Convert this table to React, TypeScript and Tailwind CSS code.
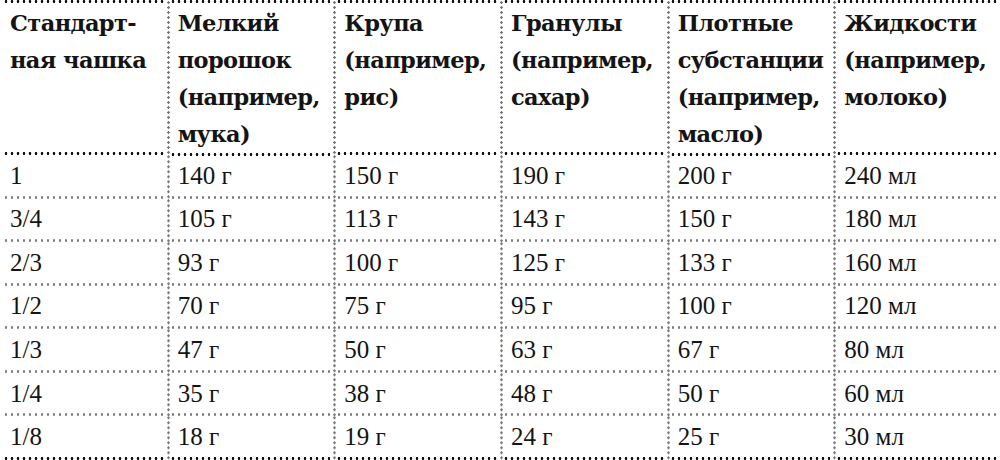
import React from 'react';

const HEADERS: string[][] = [
  ['Стандарт-', 'ная чашка'],
  ['Мелкий', 'порошок', '(например,', 'мука)'],
  ['Крупа', '(например,', 'рис)'],
  ['Гранулы', '(например,', 'сахар)'],
  ['Плотные', 'субстанции', '(например,', 'масло)'],
  ['Жидкости', '(например,', 'молоко)'],
];

const ROWS: string[][] = [
  ['1', '140 г', '150 г', '190 г', '200 г', '240 мл'],
  ['3/4', '105 г', '113 г', '143 г', '150 г', '180 мл'],
  ['2/3', '93 г', '100 г', '125 г', '133 г', '160 мл'],
  ['1/2', '70 г', '75 г', '95 г', '100 г', '120 мл'],
  ['1/3', '47 г', '50 г', '63 г', '67 г', '80 мл'],
  ['1/4', '35 г', '38 г', '48 г', '50 г', '60 мл'],
  ['1/8', '18 г', '19 г', '24 г', '25 г', '30 мл'],
];

// dotted rules, drawn as repeated dots so the spacing matches the print
function HLine({ dark }: { dark?: boolean }) {
  return dark ? (
    <div className="mx-[3px] h-[3px] shrink-0 bg-[radial-gradient(circle,#111_1.1px,transparent_1.6px)] bg-[length:6px_3px] bg-repeat-x" />
  ) : (
    <div className="mx-[3px] h-[3px] shrink-0 bg-[radial-gradient(circle,#7a7a7a_1px,transparent_1.5px)] bg-[length:6px_3px] bg-repeat-x" />
  );
}

function Cell({ col, children, top, dark, className }: { col: number; children: React.ReactNode; top?: boolean; dark?: boolean; className?: string }) {
  const vline = col > 0
    ? 'bg-[radial-gradient(circle,#7a7a7a_1px,transparent_1.5px)] bg-[length:3px_5px] bg-repeat-y bg-left'
    : '';
  return (
    <div className={`flex flex-col ${vline}`}>
      {top && <HLine dark />}
      <div className={`flex-1 ${col > 0 ? 'pl-[11px]' : 'pl-[10px]'} ${className ?? ''}`}>{children}</div>
      <HLine dark={dark} />
    </div>
  );
}

export default function App() {
  return (
    <div
      className="h-[460px] w-[1000px] bg-white text-[#141414] grid grid-cols-6 grid-rows-[155px_repeat(7,1fr)]"
      style={{ fontFamily: '"Liberation Serif", "DejaVu Serif", serif' }}
    >
      {HEADERS.map((lines, i) => (
        <Cell
          key={`h${i}`}
          col={i}
          top
          dark
          className="pt-[2px] text-[22.5px] font-bold leading-[37px] whitespace-nowrap font-['DejaVu_Serif',serif] tracking-[-0.6px]"
        >
          {lines.map((l, j) => (
            <div key={j}>{l}</div>
          ))}
        </Cell>
      ))}
      {ROWS.map((row, r) =>
        row.map((v, c) => (
          <Cell key={`${r}-${c}`} col={c} dark={r === ROWS.length - 1} className="flex items-center text-[25px] leading-none">
            {v}
          </Cell>
        ))
      )}
    </div>
  );
}
